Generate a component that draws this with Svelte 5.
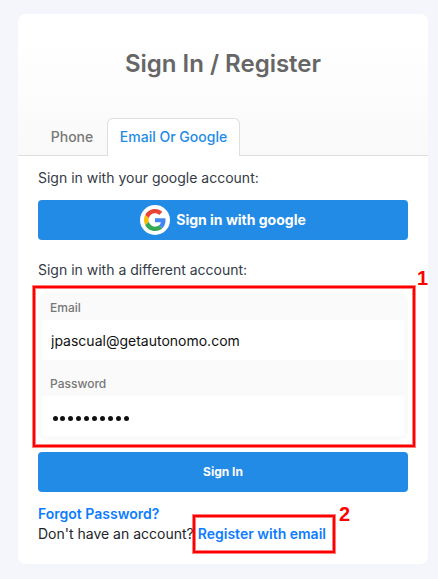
<script>
  let email = $state('jpascual@getautonomo.com');
  const dots = Array.from({ length: 10 }, (_, i) => i);
  let active = $state('email');
  const tabs = [
    { id: 'phone', label: 'Phone' },
    { id: 'email', label: 'Email Or Google' }
  ];
</script>

<main>
  <section class="card">
    <header>
      <h1>Sign In / Register</h1>
      <nav>
        {#each tabs as tab}
          <button class="tab" class:active={active === tab.id} onclick={() => (active = tab.id)}>{tab.label}</button>
        {/each}
      </nav>
    </header>

    <div class="body">
      <p class="lead">Sign in with your google account:</p>
      <button class="primary google">
        <span class="logo">
          <svg viewBox="0 0 48 48" width="22" height="22">
            <path fill="#EA4335" d="M24 9.5c3.54 0 6.71 1.22 9.21 3.6l6.85-6.85C35.9 2.38 30.47 0 24 0 14.62 0 6.51 5.38 2.56 13.22l7.98 6.19C12.43 13.72 17.74 9.5 24 9.5z" />
            <path fill="#4285F4" d="M46.98 24.55c0-1.57-.15-3.09-.38-4.55H24v9.02h12.94c-.58 2.96-2.26 5.48-4.78 7.18l7.73 6c4.51-4.18 7.09-10.36 7.09-17.65z" />
            <path fill="#FBBC05" d="M10.53 28.59c-.48-1.45-.76-2.99-.76-4.59s.27-3.14.76-4.59l-7.98-6.19C.92 16.46 0 20.12 0 24c0 3.88.92 7.54 2.56 10.78l7.97-6.19z" />
            <path fill="#34A853" d="M24 48c6.48 0 11.93-2.13 15.89-5.81l-7.73-6c-2.15 1.45-4.92 2.3-8.16 2.3-6.26 0-11.57-4.22-13.47-9.91l-7.98 6.19C6.51 42.62 14.62 48 24 48z" />
          </svg>
        </span>
        <span class="glabel">Sign in with google</span>
      </button>

      <p class="lead second">Sign in with a different account:</p>
      <div class="fields">
        <label for="email">Email</label>
        <input id="email" bind:value={email} />
        <label for="password">Password</label>
        <div class="password" id="password">
          {#each dots as dot (dot)}<i></i>{/each}
        </div>
        <span class="mark mark-one"></span>
        <span class="num num-one">1</span>
      </div>

      <button class="primary submit">Sign In</button>
      <div class="links">
        <div><a class="forgot" href="#forgot">Forgot Password?</a></div>
        <div class="register">
          <span class="ask">Don't have an account?</span>
          <a class="reg" href="#register">Register with email</a>
          <span class="mark mark-two"></span>
          <span class="num num-two">2</span>
        </div>
      </div>
    </div>
  </section>
</main>

<style>
  :global(body) { background: #f5f6fb; }
  main {
    box-sizing: border-box;
    height: 579px;
    padding: 14px 10px 15px 18px;
    overflow: hidden;
    font-family: Inter, 'Liberation Sans', sans-serif;
    font-size: 14px;
    color: #212529;
  }
  button { font: inherit; border: 0; margin: 0; }
  .card { height: 550px; border-radius: 8px; background: #fff; }
  header {
    box-sizing: border-box;
    height: 142px;
    display: flex;
    flex-direction: column;
    justify-content: space-between;
    border-bottom: 1px solid #dedede;
    border-radius: 8px 8px 0 0;
    background: linear-gradient(#fff 15%, #f9f9f9);
  }
  h1 {
    margin: 35px 0 0;
    text-align: center;
    font-size: 24px;
    line-height: 30px;
    font-weight: 600;
    color: #666;
  }
  nav { display: flex; margin: 0 0 -1px 19px; }
  .tab {
    box-sizing: border-box;
    height: 38px;
    padding: 0 11px 2px;
    border: 1px solid transparent;
    border-bottom: 0;
    border-radius: 6px 6px 0 0;
    background: none;
    color: #777;
    white-space: nowrap;
    width: 70px;
    font-weight: 500;
  }
  .tab.active { width: 133px; background: #fff; border-color: #dedede; color: #228be6; }
  .body { padding: 12px 20px 0; }
  .lead { margin: 0; line-height: 20px; color: #343a46; }
  .primary {
    display: flex;
    align-items: center;
    justify-content: center;
    width: 370px;
    height: 40px;
    padding: 0;
    border-radius: 4px;
    background: #228be6;
    color: #fff;
  }
  .google { margin-top: 12px; font-weight: 700; gap: 6px; }
  .glabel { padding-bottom: 2px; }
  .logo {
    display: flex;
    align-items: center;
    justify-content: center;
    width: 30px;
    height: 30px;
    border-radius: 50%;
    background: #fff;
  }
  .second { margin-top: 20px; }
  .fields {
    position: relative;
    box-sizing: border-box;
    height: 148px;
    margin-top: 12px;
    padding: 6px 4px 4px;
    border-radius: 9px;
    background: #fafafa;
  }
  label { display: block; height: 22px; padding-left: 8px; line-height: 20px; font-size: 12px; font-weight: 500; color: #777; }
  input {
    display: block;
    box-sizing: border-box;
    width: 362px;
    height: 40px;
    margin: 0 0 14px;
    padding: 0 9px;
    border: 0;
    border-radius: 4px;
    background: #fff;
    font: inherit;
    color: #111;
  }
  .password {
    display: flex;
    align-items: center;
    gap: 2.9px;
    box-sizing: border-box;
    height: 40px;
    padding: 4px 0 0 10.5px;
    border-radius: 4px;
    background: #fff;
  }
  .password i { width: 5px; height: 5px; border-radius: 50%; background: #111; }
  .submit { margin-top: 12px; padding-bottom: 2px; font-size: 12px; font-weight: 700; }
  .links { margin-top: 12px; line-height: 20px; }
  a { color: #0d7cff; font-weight: 600; text-decoration: none; }
  .register { position: relative; display: flex; gap: 4px; white-space: nowrap; }
  .mark {
    position: absolute;
    box-sizing: border-box;
    border: 2px solid #f00;
    box-shadow: 0 0 0 1px rgba(255, 0, 0, 0.5), inset 0 0 0 1px rgba(255, 0, 0, 0.5);
    pointer-events: none;
  }
  .mark-one { left: -5px; top: -6px; width: 382px; height: 161px; }
  .mark-two { left: 155px; top: -9px; width: 142px; height: 38px; }
  .num {
    position: absolute;
    font: bold 20px/20px 'Liberation Sans', Arial, sans-serif;
    color: #f00;
  }
  .num-one { left: 379px; top: -24px; }
  .num-two { left: 301px; top: -20px; }
</style>
